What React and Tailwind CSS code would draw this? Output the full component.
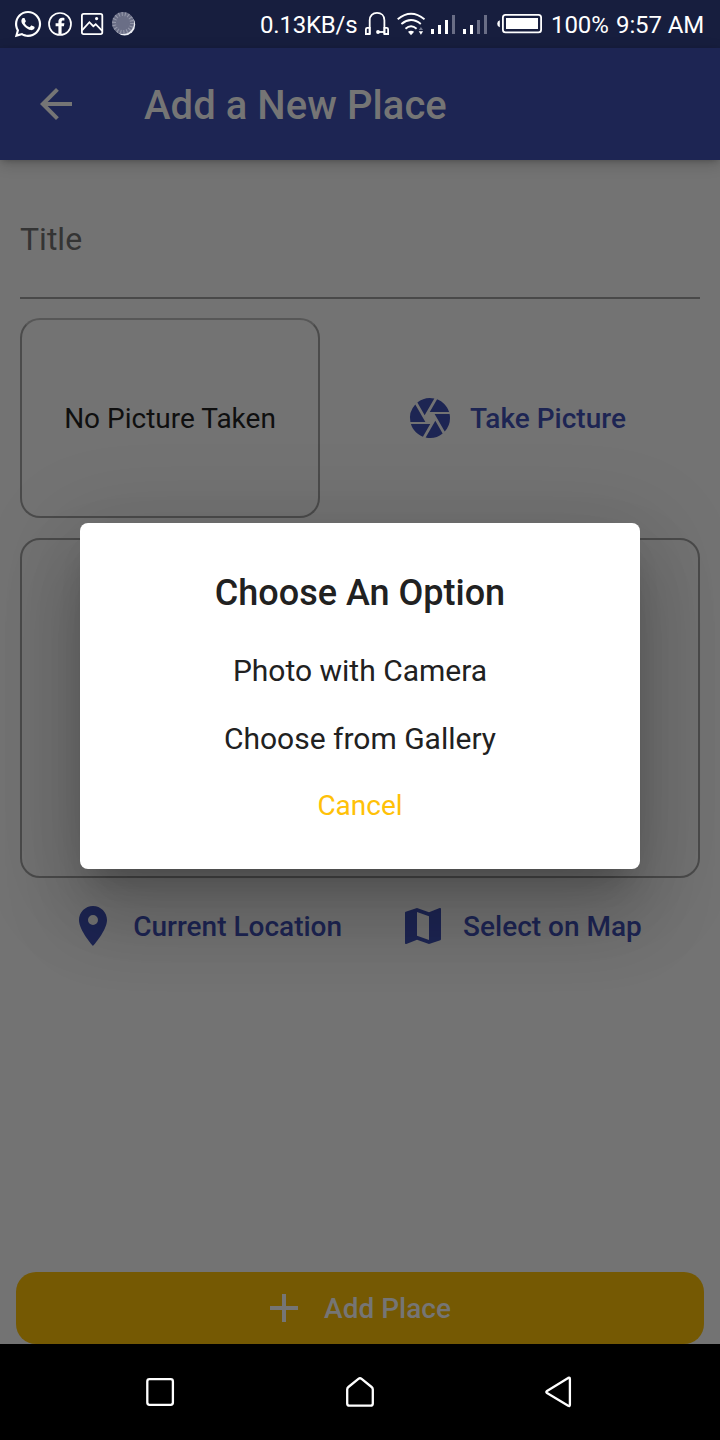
import { MdAdd, MdArrowBack, MdCamera, MdLocationOn, MdMap } from "react-icons/md";
import { FaWhatsapp } from "react-icons/fa";

function FacebookIcon() {
  return (
    <svg className="ml-[7px] h-6 w-6" viewBox="48 12 24 24" fill="none">
      <circle cx="60" cy="24" r="11" stroke="#fff" strokeWidth="1.7" />
      <path
        d="M58.4 34.6V26.2H55.6V23.2H58.4V21.6C58.4 18.9 60 17.7 62.2 17.7C63.2 17.7 64 17.8 64.4 17.9V20.5H63C61.9 20.5 61.6 21.1 61.6 22V23.2H64.4L63.9 26.2H61.6V34.6Z"
        fill="#fff"
      />
    </svg>
  );
}

function PictureIcon() {
  return (
    <svg className="ml-2 h-6 w-6" viewBox="80 12 24 24" fill="none" stroke="#fff" strokeWidth="1.8">
      <rect x="81.9" y="13.9" width="20.4" height="20.2" rx="1.8" />
      <path d="M82 30.3L89.4 22.2L93.3 26.2L95.7 24.2L102.2 30.8" />
      <circle cx="96.6" cy="18.6" r="1.6" fill="#fff" stroke="none" />
    </svg>
  );
}

function SpinnerIcon() {
  return (
    <svg className="ml-[7px] h-[26px] w-[26px]" viewBox="111 11 26 26" fill="none">
      <circle cx="124.6" cy="24.8" r="10.6" fill="#eceef4" />
      <circle cx="123" cy="23" r="11" fill="#6a6e86" />
      <circle cx="123" cy="23" r="9" stroke="#9598aa" strokeWidth="4" strokeDasharray="1.1 2.04" />
    </svg>
  );
}

function HeadphonesIcon() {
  return (
    <svg className="ml-2 h-7 w-6 shrink-0" viewBox="365 10 24 28" fill="none" stroke="#fff" strokeWidth="1.8">
      <path d="M369.7 34V20.2C369.7 15.8 372.7 12.9 377 12.9S384.4 15.8 384.4 20.2V34" />
      <path d="M369.7 27.9H367.2Q365.9 27.9 365.9 29.2V34H369.7Z" />
      <path d="M384.4 27.9H386.8Q388.1 27.9 388.1 29.2V34H384.4Z" />
      <path d="M378 32H384" />
      <circle cx="378" cy="32" r="1.9" fill="#fff" stroke="none" />
    </svg>
  );
}

function WifiIcon() {
  return (
    <svg className="ml-2 h-7 w-7 shrink-0" viewBox="397 10 28 28" fill="none" stroke="#fff" strokeWidth="1.9">
      <path d="M397.7 19.3Q411 8.3 424.5 19.3" />
      <path d="M401.4 23.9Q411 16 420.8 23.9" />
      <path d="M405.5 28.7Q411 23.6 416.6 28.7" />
      <path d="M408 31.8Q411 29.8 414.1 31.8L411 35.2Z" fill="#fff" stroke="none" />
      <path d="M418.8 30L420.9 27L423 30Z" fill="#747991" stroke="none" />
      <path d="M418.7 31.2H423.1L420.9 34.8Z" fill="#fff" stroke="none" />
    </svg>
  );
}

function SignalIcon({ level }) {
  const heights = [5, 9, 14, 19];
  return (
    <div className="flex h-5 items-end gap-1">
      {heights.map((h, i) => (
        <div
          key={h}
          className={i < level ? "w-[3px] bg-white" : "w-[3px] bg-[#696d85]"}
          style={{ height: h }}
        />
      ))}
    </div>
  );
}

function BatteryIcon() {
  return (
    <svg className="ml-[9px] h-5 w-[46px] shrink-0" viewBox="496 14 46 20" fill="none">
      <path d="M499.8 20.3V27.2Q497.2 26.5 497.2 23.7T499.8 20.3Z" fill="#fff" />
      <rect x="502.9" y="14.9" width="38.2" height="17.4" rx="2.6" stroke="#fff" strokeWidth="1.8" />
      <rect x="506" y="18" width="32" height="11" fill="#fff" />
    </svg>
  );
}

function StatusBar() {
  return (
    <header className="flex h-12 shrink-0 items-center bg-[#171e3e] text-[24px] leading-none whitespace-nowrap text-white">
      <FaWhatsapp className="ml-[13px] h-[30px] w-[30px]" />
      <div className="-ml-0.5 flex items-center">
        <FacebookIcon />
        <PictureIcon />
        <SpinnerIcon />
      </div>
      <span className="mt-0.5 ml-[123px] w-[97px] tracking-[-0.2px]">0.13KB/s</span>
      <HeadphonesIcon />
      <WifiIcon />
      <div className="ml-1.5 flex gap-2 pb-px">
        <SignalIcon level={3} />
        <SignalIcon level={2} />
      </div>
      <BatteryIcon />
      <span className="mt-0.5 ml-[9px] w-14 tracking-[-0.1px]">100%</span>
      <span className="mt-0.5 ml-[9px] tracking-[-0.1px]">9:57 AM</span>
    </header>
  );
}

function IconButton({ icon: Icon, label }) {
  return (
    <button className="flex h-[72px] items-center gap-4 pr-8 pl-6 text-[28px] font-medium whitespace-nowrap text-[#1d2553]">
      <Icon className="h-12 w-12" />
      <span className="pt-0.5">{label}</span>
    </button>
  );
}

function OptionDialog() {
  return (
    <div className="absolute top-[523px] left-20 flex h-[346px] w-[560px] flex-col items-center rounded-lg bg-white whitespace-nowrap text-[#212121] shadow-[0_22px_30px_-14px_rgba(0,0,0,0.2),0_48px_76px_6px_rgba(0,0,0,0.14),0_18px_92px_16px_rgba(0,0,0,0.12)]">
      <h2 className="mt-12 text-[36px] leading-[44px] font-medium">Choose An Option</h2>
      <button className="mt-[38px] text-[30px] leading-9">Photo with Camera</button>
      <button className="mt-8 text-[30px] leading-9">Choose from Gallery</button>
      <button className="mt-[31px] text-[28px] leading-9 text-[#ffc107]">Cancel</button>
    </div>
  );
}

function NavigationBar() {
  return (
    <nav className="relative flex h-24 shrink-0 items-center bg-black pl-[144px]">
      <svg className="h-8 w-8" viewBox="144 1376 32 32" fill="none" stroke="#fff" strokeWidth="2.3">
        <rect x="147.3" y="1379.2" width="25.6" height="25.6" rx="2.2" />
      </svg>
      <svg className="ml-[168px] h-8 w-8" viewBox="344 1376 32 32" fill="none" stroke="#fff" strokeWidth="2.3" strokeLinejoin="round">
        <path d="M347.2 1389.6Q347.2 1388 348.4 1387L358.4 1378.9Q360 1377.6 361.6 1378.9L371.6 1387Q372.8 1388 372.8 1389.6V1403.4Q372.8 1405.6 370.6 1405.6H349.4Q347.2 1405.6 347.2 1403.4Z" />
      </svg>
      <svg className="ml-[168px] h-8 w-8" viewBox="544 1376 32 32" fill="none" stroke="#fff" strokeWidth="2.3" strokeLinejoin="round">
        <path d="M568.2 1377.9Q569.9 1377.2 569.9 1379V1404.8Q569.9 1406.6 568.2 1405.8L547 1393Q545.6 1392 547 1391Z" />
      </svg>
    </nav>
  );
}

export default function App() {
  return (
    <div className="relative flex h-[1440px] w-[720px] flex-col overflow-hidden bg-[#737373] font-['Roboto',sans-serif]">
      <StatusBar />
      <div className="flex h-28 shrink-0 items-center bg-[#1d2553] text-[#757575] shadow-[0_2px_6px_-2px_rgba(0,0,0,0.25),0_4px_14px_rgba(0,0,0,0.18)]">
        <MdArrowBack className="ml-8 h-12 w-12" />
        <h1 className="mt-1 ml-16 text-[40px] leading-none font-medium tracking-[0.05px] whitespace-nowrap">Add a New Place</h1>
      </div>
      <main className="flex flex-1 flex-col px-5">
        <div className="h-[139px] shrink-0 border-b-2 border-[#494949] pt-[60px] text-[32px] leading-[38px] text-[#343434]">
          Title
        </div>
        <div className="mt-[19px] flex h-[200px] shrink-0">
          <div className="flex w-[300px] items-center justify-center rounded-[20px] border-2 border-[#4b4b4b] border-t-[#575757] pt-0.5 text-[28px] whitespace-nowrap text-[#0f0f0f]">
            No Picture Taken
          </div>
          <div className="ml-5 flex flex-1 items-center justify-center">
            <IconButton icon={MdCamera} label="Take Picture" />
          </div>
        </div>
        <div className="mt-5 h-[340px] shrink-0 rounded-[20px] border-2 border-[#4b4b4b]" />
        <div className="mt-3 flex h-[72px] justify-center gap-px pr-px">
          <IconButton icon={MdLocationOn} label="Current Location" />
          <IconButton icon={MdMap} label="Select on Map" />
        </div>
        <button className="-mx-1 mt-auto flex h-[72px] shrink-0 items-center justify-center gap-4 rounded-[20px] bg-[#755903] pr-[9px] text-[28px] font-medium whitespace-nowrap text-[#757575]">
          <MdAdd className="h-12 w-12" />
          <span className="pt-0.5">Add Place</span>
        </button>
      </main>
      <OptionDialog />
      <NavigationBar />
    </div>
  );
}
